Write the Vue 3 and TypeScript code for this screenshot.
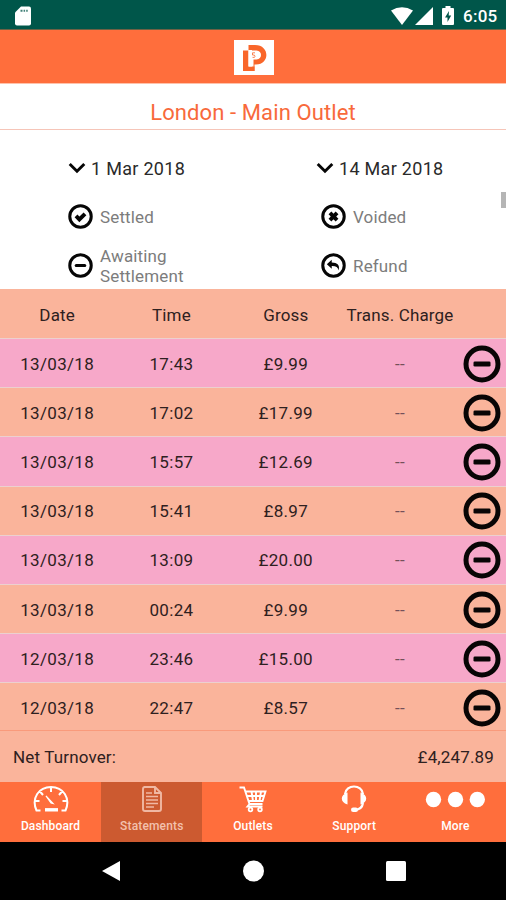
<script setup lang="ts">
interface Entry {
  date: string
  time: string
  gross: string
  charge: string
}

const entries: Entry[] = [
  { date: '13/03/18', time: '17:43', gross: '£9.99', charge: '--' },
  { date: '13/03/18', time: '17:02', gross: '£17.99', charge: '--' },
  { date: '13/03/18', time: '15:57', gross: '£12.69', charge: '--' },
  { date: '13/03/18', time: '15:41', gross: '£8.97', charge: '--' },
  { date: '13/03/18', time: '13:09', gross: '£20.00', charge: '--' },
  { date: '13/03/18', time: '00:24', gross: '£9.99', charge: '--' },
  { date: '12/03/18', time: '23:46', gross: '£15.00', charge: '--' },
  { date: '12/03/18', time: '22:47', gross: '£8.57', charge: '--' },
]

const tabs: string[] = ['Dashboard', 'Statements', 'Outlets', 'Support', 'More']
const active = 'Statements'
</script>

<template>
  <div class="screen">
    <div class="status">
      <svg class="sd" viewBox="0 0 16 20" width="16" height="20">
        <path d="M6 .5h8q2 0 2 2v15q0 2-2 2H2q-2 0-2-2V6.500z" fill="#fff" />
        <path d="M5.500 4.800h2M8.600 4.800h1.500M11.200 4.800h1.500" stroke="#00564a" stroke-width="2" opacity=".75" />
      </svg>
      <div class="status-right">
        <svg viewBox="0 0 22 18" width="22" height="18"><path d="M0 3.500Q11-3 22 3.500L11 18z" fill="#fff" /></svg>
        <svg class="cell" viewBox="0 0 18 18" width="18" height="18"><path d="M18 0v18H0z" fill="#fff" /></svg>
        <svg class="battery" viewBox="0 0 12 19" width="12" height="19">
          <path d="M3.500 0h5v2H11q1 0 1 1v15q0 1-1 1H1q-1 0-1-1V3q0-1 1-1h2.500z" fill="#fff" />
          <path d="M7 5 3 11.500h2.500V16L9.200 9.500H6.700z" fill="#00564a" />
        </svg>
        <span class="clock">6:05</span>
      </div>
    </div>

    <header class="brand">
      <svg viewBox="0 0 40 35" width="40" height="35">
        <path d="M0 0h40v35H0z" fill="#fff" />
        <path d="M14.500 5H21C36 5 36 24.500 22 24.500h-1.500V31h-2.500V10H14.500z" fill="#f9662a" />
        <path d="M9 10.500h5.500v16H20.500V31H9z" fill="#f9662a" />
        <path d="M14.500 10.500h8c6 0 6 9 0 9h-3v7h-5z" fill="#fff" />
        <path d="M21 12.800h-2.500v2.200q2.500-.5 2.500 1.300t-2.500 1" fill="none" stroke="#f9662a" stroke-width=".8" />
      </svg>
    </header>

    <h1 class="title">London - Main Outlet</h1>

    <section class="filters">
      <div class="column left">
        <div class="date">
          <svg viewBox="0 0 18 12" width="18" height="12"><path d="M1.700 2 9 9.300 16.300 2" /></svg>
          <span>1 Mar 2018</span>
        </div>
        <div class="legend">
          <svg viewBox="0 0 24 24" width="25" height="25"><circle cx="12" cy="12" r="10.300" /><path class="thick" d="m7.700 11.500 3.200 3.300 5.400-5.400" /></svg>
          <span>Settled</span>
        </div>
        <div class="legend two">
          <svg viewBox="0 0 24 24" width="25" height="25"><circle cx="12" cy="12" r="10.300" /><path d="M7.900 12h8.200" stroke-linecap="round" /></svg>
          <span>Awaiting<br />Settlement</span>
        </div>
      </div>
      <div class="column right">
        <div class="date">
          <svg viewBox="0 0 18 12" width="18" height="12"><path d="M1.700 2 9 9.300 16.300 2" /></svg>
          <span>14 Mar 2018</span>
        </div>
        <div class="legend">
          <svg viewBox="0 0 24 24" width="25" height="25"><circle cx="12" cy="12" r="10.300" /><path class="thick" d="m8.600 8.600 6.800 6.800m0-6.800-6.800 6.800" /></svg>
          <span>Voided</span>
        </div>
        <div class="legend two">
          <svg viewBox="0 0 24 24" width="25" height="25">
            <circle cx="12" cy="12" r="10.300" />
            <path class="solid" d="M5.600 10.700 10.300 6.500v2.700c5.500 0 8.200 2.700 6.500 7.600-.3-3.200-2.500-4.400-6.500-4.300v2.600z" />
          </svg>
          <span>Refund</span>
        </div>
      </div>
      <i class="scrollbar"></i>
    </section>

    <section class="table">
      <div class="row head">
        <span>Date</span><span>Time</span><span>Gross</span><span>Trans. Charge</span>
      </div>
      <div v-for="(entry, i) in entries" :key="i" class="row" :class="{ pink: i % 2 === 0 }">
        <span>{{ entry.date }}</span>
        <span>{{ entry.time }}</span>
        <span>{{ entry.gross }}</span>
        <span class="charge">{{ entry.charge }}</span>
        <svg viewBox="0 0 38 38" width="38" height="38">
          <circle cx="19" cy="19" r="16" />
          <rect x="10.500" y="16.400" width="17" height="5.200" rx="1.300" />
        </svg>
      </div>
    </section>

    <div class="total"><span>Net Turnover:</span><span class="amount">£4,247.89</span></div>

    <nav class="tabs">
      <div v-for="tab in tabs" :key="tab" class="tab" :class="{ active: tab === active }">
        <svg v-if="tab === 'Dashboard'" viewBox="0 0 36 28" width="36" height="28">
          <path d="M7.500 25.500H3.500C-2 13 6 2 18 2s20 11 14.500 23.500h-4M18 2v5M7 6.500l3 3.500M29 6.500 26 10M1.500 16h5M34.500 16h-5" stroke-width="2" />
          <path d="m13 11 7 7.500-2-.5z" fill="#fff" stroke-width="1.200" />
          <path d="M12 24.800h13" stroke-width="3.400" />
        </svg>
        <svg v-else-if="tab === 'Statements'" viewBox="0 0 22 28" width="22" height="28">
          <path d="M3 2h11l6 6v16q0 2-2 2H4q-2 0-2-2V4q0-2 2-2M14 2v6h6" stroke-width="1.900" />
          <path d="M5 8h6M5 11.500h12M5 15h12M5 18.500h12M5 22h8" stroke-width="1.600" />
        </svg>
        <svg v-else-if="tab === 'Outlets'" viewBox="0 0 28 28" width="28" height="28">
          <path d="M.5 2.500h4.500L10.500 19h13M6.500 6.500h20l-3 9.500H9.500M8 11h17M12.500 6.500l1.500 9.500M17 6.500v9.500M22 6.500 20.500 16M10.500 19l-2 2.500h15" stroke-width="1.900" />
          <circle cx="11.500" cy="24.500" r="1.800" stroke-width="1.800" /><circle cx="21" cy="24.500" r="1.800" stroke-width="1.800" />
        </svg>
        <svg v-else-if="tab === 'Support'" viewBox="0 0 26 28" width="26" height="28">
          <path d="M4 9C5-1 21-1 22 9M22 18q-1 6.500-8 6.800" stroke-width="2.200" />
          <path d="M6.500 7.500v12Q.8 17.500.8 13.500T6.500 7.500zM19.500 7.500v12q5.700-2 5.700-6T19.500 7.500z" fill="#fff" stroke="none" />
          <rect x="10" y="22.500" width="7" height="4.500" rx="2.200" fill="#fff" stroke="none" />
        </svg>
        <svg v-else viewBox="0 0 60 28" width="60" height="28">
          <g fill="#fff" stroke="none"><circle cx="8.500" cy="14.500" r="7.700" /><circle cx="30.500" cy="14.500" r="7.700" /><circle cx="52.300" cy="14.500" r="7.700" /></g>
        </svg>
        <span>{{ tab }}</span>
      </div>
    </nav>

    <div class="system">
      <svg viewBox="0 0 20 22" width="20" height="22"><path d="M0 11 18 1v20z" /></svg>
      <svg viewBox="0 0 22 22" width="22" height="22"><circle cx="10.500" cy="11" r="10.500" /></svg>
      <svg viewBox="0 0 20 20" width="20" height="20"><rect width="20" height="20" rx="1.500" /></svg>
    </div>
  </div>
</template>

<style>
body {
  margin: 0;
  background: #fff;
}
</style>

<style scoped>
.screen {
  width: 506px;
  height: 900px;
  display: flex;
  flex-direction: column;
  overflow: hidden;
  font-family: Roboto, "Liberation Sans", sans-serif;
  color: #2e2020;
}
.screen > * {
  flex: none;
  box-sizing: border-box;
}
svg {
  display: block;
  flex: none;
}
.status {
  height: 30px;
  background: #00564a;
  border-bottom: 1px solid #6e6145;
  display: flex;
  justify-content: space-between;
  align-items: center;
  padding: 2px 8px 0 15px;
}
.status-right {
  display: flex;
  align-items: center;
}
.cell {
  margin-left: 2px;
}
.battery {
  margin-left: 9px;
}
.clock {
  width: 35px;
  margin-left: 9px;
  color: #fff;
  font-size: 17px;
  font-weight: 500;
  letter-spacing: 0.25px;
  white-space: nowrap;
}
.brand {
  height: 54px;
  background: #ff6e3c;
  border-bottom: 1px solid #ffc2ab;
  display: flex;
  justify-content: center;
  padding: 9.500px 0 0 1px;
}
.title {
  height: 46px;
  margin: 0;
  border-bottom: 1px solid #f6c5b8;
  color: #f8693b;
  font-size: 22px;
  font-weight: 400;
  line-height: 57px;
  letter-spacing: 0.1px;
  text-align: center;
}
.filters {
  position: relative;
  height: 159px;
  display: grid;
  grid-template-columns: 249px 257px;
  padding-top: 25px;
  background: #fff;
}
.date {
  display: flex;
  align-items: center;
  gap: 5px;
  height: 26px;
  padding-left: 68px;
  font-size: 18px;
  letter-spacing: 0.3px;
  color: #2a2a2a;
}
.date svg,
.legend svg {
  fill: none;
  stroke: #060606;
  stroke-width: 2.900;
}
.legend {
  display: flex;
  align-items: center;
  gap: 7px;
  height: 49px;
  margin-top: 11px;
  padding-left: 68px;
  box-sizing: border-box;
  font-size: 17px;
  line-height: 20px;
  letter-spacing: 0.15px;
  color: #7c7c7c;
}
.legend.two {
  margin-top: 0;
}
.right .legend {
  padding-left: 72px;
}
.right .date {
  padding-left: 67px;
}
.legend .thick {
  stroke-width: 3.800;
}
.legend .solid {
  fill: #060606;
  stroke: none;
}
.scrollbar {
  position: absolute;
  right: 0;
  top: 62px;
  width: 5px;
  height: 16px;
  background: #b5b5b5;
}
.table {
  height: 442px;
  display: grid;
  grid-template-rows: 50px repeat(7, 49.200px) 1fr;
  overflow: hidden;
  border-bottom: 1px solid #f99a7b;
}
.row {
  display: grid;
  grid-template-columns: repeat(4, 114.300px) 49px;
  align-items: center;
  text-align: center;
  background: #fab49b;
  border-bottom: 1.500px solid #ecd0cf;
  font-size: 17px;
  letter-spacing: 0.300px;
  padding-top: 1px;
  box-sizing: border-box;
}
.row:last-child {
  border-bottom: 0;
  padding-top: 2px;
}
.row.pink {
  background: #f7a8c9;
}
.row.head {
  letter-spacing: 0.150px;
  padding-top: 3px;
}
.charge {
  color: #74505a;
}
.row svg {
  justify-self: center;
}
.row circle {
  fill: none;
  stroke: #080505;
  stroke-width: 5;
}
.row rect {
  fill: #080505;
}
.total {
  height: 51px;
  display: flex;
  justify-content: space-between;
  align-items: center;
  padding: 1px 12px 0 13px;
  background: #fab49b;
  font-size: 17px;
  letter-spacing: 0.150px;
}
.tabs {
  height: 60px;
  display: grid;
  grid-template-columns: repeat(5, 1fr);
  background: #ff6e3c;
}
.tab {
  display: flex;
  flex-direction: column;
  align-items: center;
  padding-top: 3px;
  color: #fff;
  font-size: 12px;
  font-weight: 500;
  line-height: 16px;
  letter-spacing: 0.15px;
}
.tab span {
  margin-top: 5px;
}
.tab svg {
  fill: none;
  stroke: #fff;
}
.tab.active {
  background: #cc5a30;
  color: #f3c1ae;
}
.tab.active svg {
  stroke: #f0b8a3;
}
.system {
  height: 58px;
  display: flex;
  justify-content: space-between;
  align-items: center;
  padding: 0 100px 0 102px;
  background: #000;
}
.system svg {
  fill: #fff;
}
</style>
